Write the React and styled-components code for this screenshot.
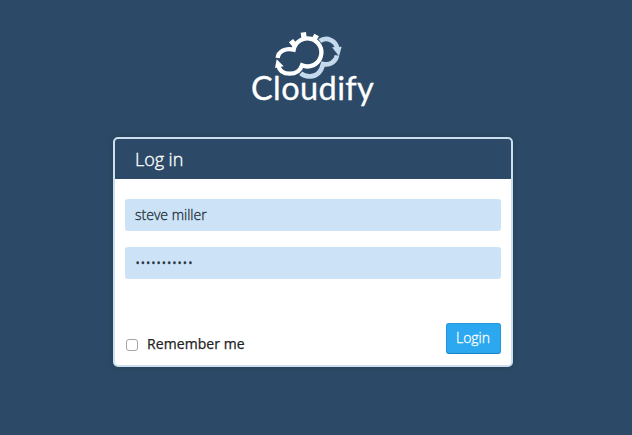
import React from "react";
import styled, { createGlobalStyle } from "styled-components";

const GlobalStyle = createGlobalStyle`
  * { box-sizing: border-box; }
  body { margin: 0; background: #2c4a67; font-family: "Open Sans", sans-serif; }
`;

const Page = styled.main`
  display: flex;
  flex-direction: column;
  align-items: center;
  height: 435px;
  padding-top: 30px;
  overflow: hidden;
  background: #2c4a67;
`;

const Brand = styled.header`
  display: flex;
  flex-direction: column;
  width: 130px;
  height: 107px;
`;

const CloudMark = styled.svg`
  width: 70px;
  height: 50px;
  margin-left: 22px;
  flex: none;
`;

const BrandName = styled.span`
  margin: -12px 0 0 0;
  font: 400 32.5px/40px Lato, sans-serif;
  letter-spacing: 0.4px;
  -webkit-text-stroke: 0.3px #fff;
  color: #fff;
`;

const Card = styled.form`
  display: flex;
  flex-direction: column;
  width: 400px;
  height: 230px;
  margin-right: 6px;
  border: 2px solid #cbdfef;
  border-radius: 5px;
  background: #fff;
  box-shadow: 0 0 6px rgba(0, 0, 0, 0.18);
  overflow: hidden;
`;

const CardTitle = styled.h1`
  height: 40px;
  margin: 0;
  padding-left: 20px;
  background: #2c4a67;
  color: #fff;
  font-size: 18px;
  font-weight: 300;
  line-height: 40px;
  letter-spacing: -0.05px;
  -webkit-text-stroke: 0.35px #fff;
`;

const Fields = styled.div`
  display: flex;
  flex-direction: column;
  gap: 16px;
  padding: 20px 10px 0;
`;

const Input = styled.input`
  width: 376px;
  height: 32px;
  padding: 0 10px 2px;
  border: 0;
  border-radius: 3px;
  outline: 0;
  background: #cce3f7;
  color: #222b35;
  font: 300 14px "Open Sans", sans-serif;
  -webkit-text-stroke: 0.3px #222b35;
`;

const Footer = styled.div`
  display: flex;
  align-items: flex-end;
  justify-content: space-between;
  margin-top: 44px;
  padding: 0 10px 0 11px;
`;

const Remember = styled.label`
  display: flex;
  align-items: center;
  gap: 9px;
  height: 20px;
  margin-bottom: 1px;
  color: #222;
  font-size: 14px;
  letter-spacing: 0.08px;
  -webkit-text-stroke: 0.25px #222;
`;

const Checkbox = styled.input`
  appearance: none;
  width: 12px;
  height: 12px;
  margin: 4px 0 0;
  border: 1px solid #a5a5a5;
  border-radius: 3px;
  background: #fff;
`;

const LoginButton = styled.button`
  width: 55px;
  height: 31px;
  padding: 0 1px 2px 0;
  border: 1px solid #2496da;
  border-bottom-color: #1c83c4;
  border-radius: 3px;
  background: #2ba8f0;
  color: #fff;
  font: 300 14px "Open Sans", sans-serif;
  -webkit-text-stroke: 0.3px #fff;
`;

const CLOUD_OUTLINE =
  "M114 114 C116 95 137 83 162 89 A42 42 0 1 1 187 136 C181 154 167 161 150 161 C132 161 119 152 116 136";

function CloudLogo() {
  return (
    <CloudMark viewBox="100 30 210 150" fill="none" aria-hidden="true">
      <g stroke="#c5d9ec" strokeWidth="14">
        <path d="M240 63 A34 34 0 0 1 293 87" />
        <path d="M292 106 C288 126 270 137 250 132 C246 153 232 169 212 169 Q194 170 183 160" />
      </g>
      <path d="M277 82 L306 80 L298 109 Z" fill="#c5d9ec" />
      <path d={CLOUD_OUTLINE} stroke="#2c4a67" strokeWidth="17" />
      <g stroke="#fff" strokeWidth="13">
        <path d={CLOUD_OUTLINE} />
        <path d="M154 62 L168 79 M191 37 L193 53 M231 45 L222 60" strokeWidth="16" />
      </g>
      <path d="M111 118 L106 144 L132 139 Z" fill="#fff" />
    </CloudMark>
  );
}

export default function App() {
  return (
    <>
      <GlobalStyle />
      <Page>
        <Brand>
          <CloudLogo />
          <BrandName>Cloudify</BrandName>
        </Brand>
        <Card>
          <CardTitle>Log in</CardTitle>
          <Fields>
            <Input defaultValue="steve miller" aria-label="Username" />
            <Input defaultValue="•••••••••••" aria-label="Password" />
          </Fields>
          <Footer>
            <Remember>
              <Checkbox type="checkbox" />
              Remember me
            </Remember>
            <LoginButton type="button">Login</LoginButton>
          </Footer>
        </Card>
      </Page>
    </>
  );
}
